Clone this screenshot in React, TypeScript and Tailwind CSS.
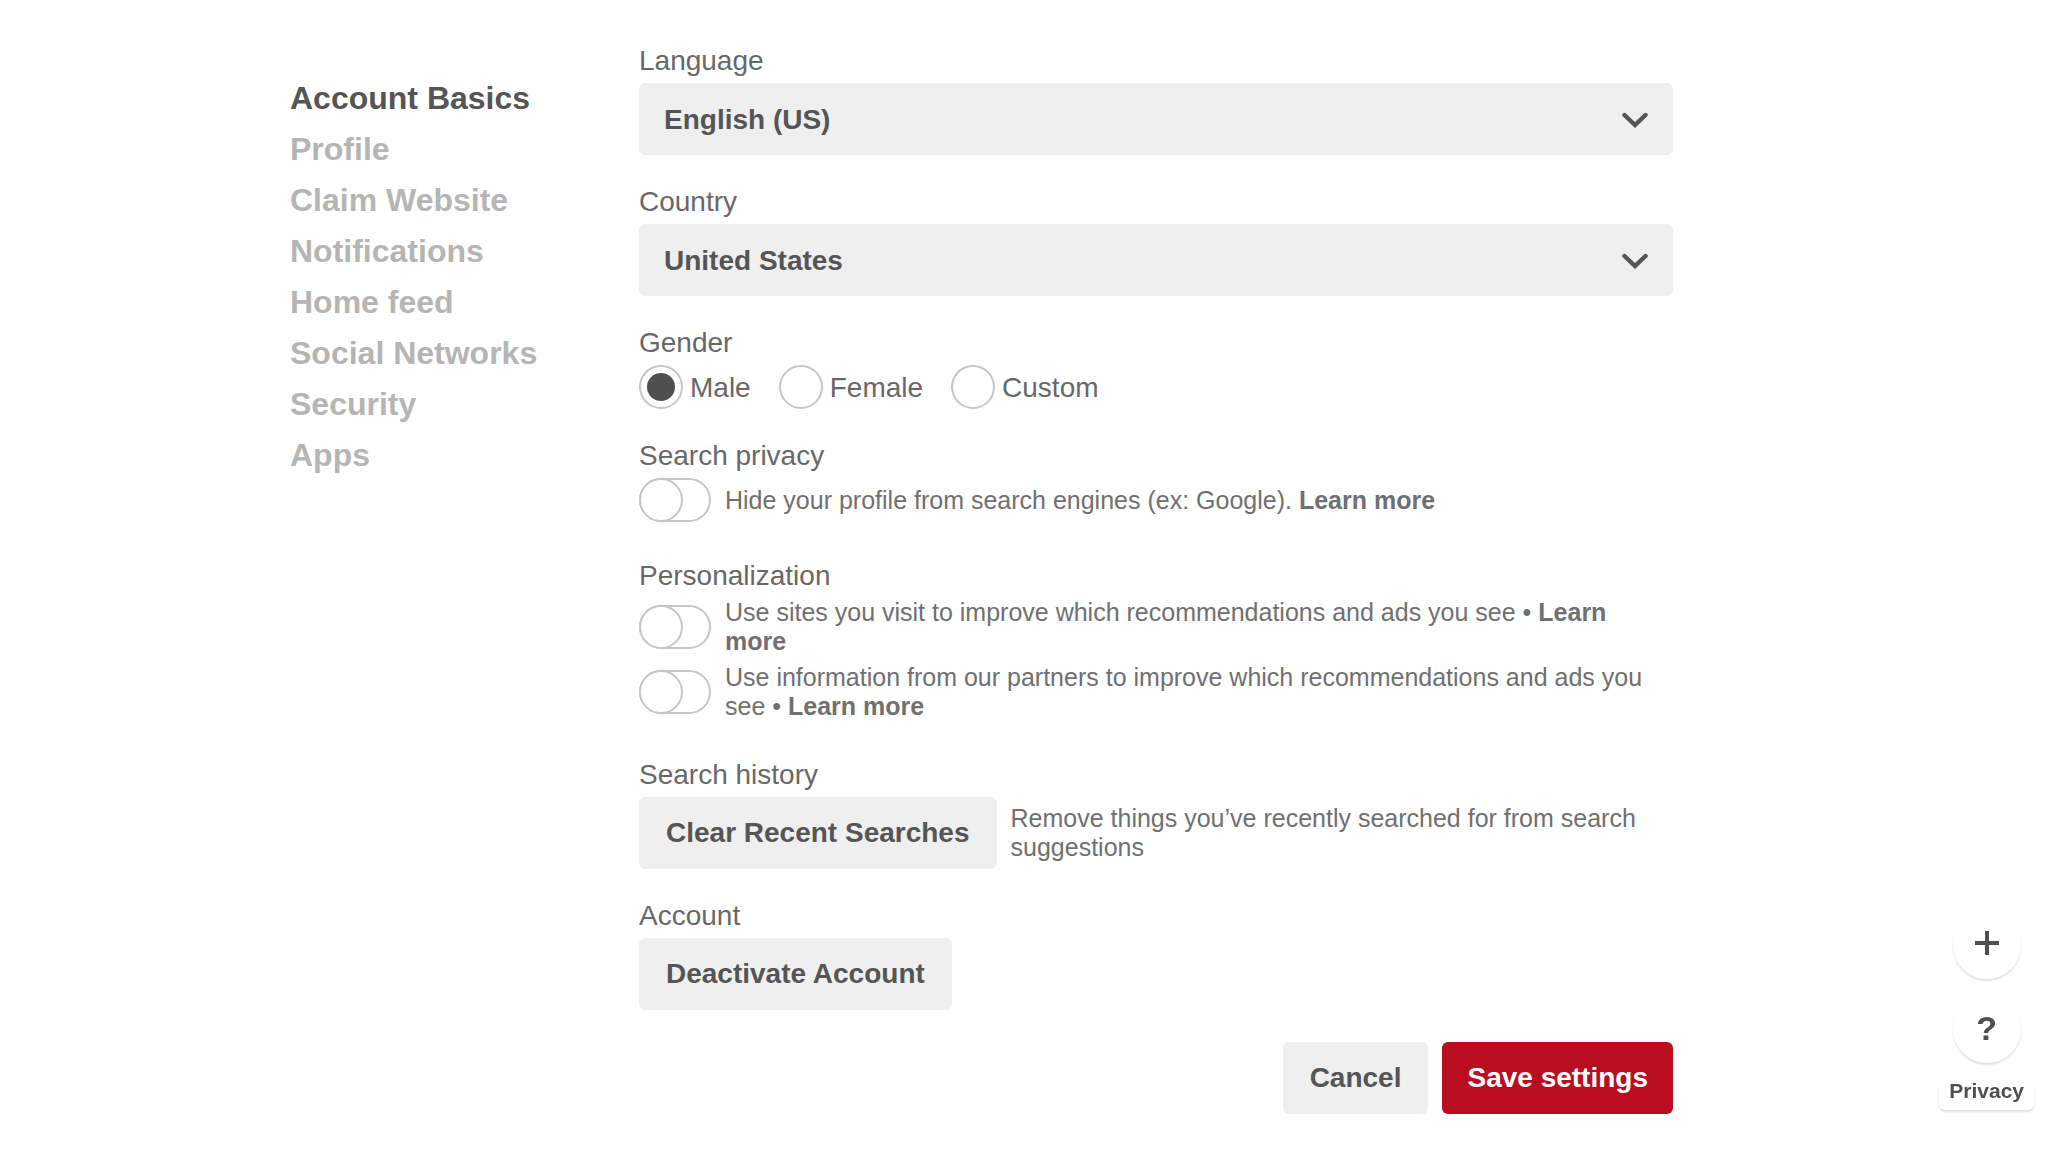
import { useState, type ReactNode } from "react";

const navItems = [
  "Account Basics",
  "Profile",
  "Claim Website",
  "Notifications",
  "Home feed",
  "Social Networks",
  "Security",
  "Apps",
];

const labelClass = "mb-1 block text-[28px] leading-[37px] text-[#686868]";
const grayButton =
  "h-[72px] shrink-0 rounded-md bg-[#efefef] px-[27px] text-[28px] font-bold text-[#555555]";

function SelectField({ id, label, options }: { id: string; label: string; options: string[] }) {
  return (
    <div>
      <label htmlFor={id} className={labelClass}>
        {label}
      </label>
      <div className="relative">
        <select
          id={id}
          className="block h-[72px] w-full appearance-none rounded-md bg-[#efefef] pt-0.5 pr-20 pl-[25px] text-[28px] font-bold text-[#555555]"
        >
          {options.map((o) => (
            <option key={o}>{o}</option>
          ))}
        </select>
        <svg
          className="pointer-events-none absolute top-[29px] right-6 h-4 w-7"
          viewBox="0 0 28 16"
          fill="none"
          stroke="#555555"
          strokeWidth="4.4"
          aria-hidden="true"
        >
          <path d="M3.5 3 14 13 24.5 3" strokeLinecap="round" />
        </svg>
      </div>
    </div>
  );
}

function Group({ label, children }: { label: string; children: ReactNode }) {
  return (
    <fieldset>
      <legend className={labelClass}>{label}</legend>
      {children}
    </fieldset>
  );
}

function ToggleRow({ id, children }: { id: string; children: ReactNode }) {
  return (
    <div className="mb-[7px] flex items-center gap-[14px]">
      <input type="checkbox" role="switch" id={id} className="peer sr-only" />
      <label
        htmlFor={id}
        aria-label="Toggle"
        className="flex h-11 w-[72px] shrink-0 rounded-full border-2 border-[#c6c6c6] bg-white peer-checked:justify-end peer-checked:bg-[#555555]"
      >
        <span className="-m-0.5 size-11 rounded-full border-2 border-[#c6c6c6] bg-white" />
      </label>
      <label htmlFor={id} className="text-[25px] leading-[29px] text-[#707070]">
        {children}
      </label>
    </div>
  );
}

function LearnMore() {
  return (
    <a href="#learn-more" className="font-bold">
      Learn more
    </a>
  );
}

export default function App() {
  const [gender, setGender] = useState("Male");

  return (
    <div className="min-h-screen bg-white font-['Liberation_Sans',Arial,sans-serif]">
      <div className="flex items-start pr-[375px] pl-[290px]">
        <nav className="w-[349px] shrink-0 pt-[73px]">
          <ul>
            {navItems.map((item, i) => (
              <li key={item}>
                <a
                  href={"#" + item.toLowerCase().replace(" ", "-")}
                  aria-current={i === 0 ? "page" : undefined}
                  className={
                    i === 0
                      ? "text-[32px] leading-[51px] font-bold text-[#555555]"
                      : "text-[32px] leading-[51px] font-bold text-[#b5b5b5]"
                  }
                >
                  {item}
                </a>
              </li>
            ))}
          </ul>
        </nav>

        <form
          className="flex min-w-0 flex-1 flex-col gap-7 pt-[42px]"
          onSubmit={(e) => e.preventDefault()}
        >
          <SelectField id="language" label="Language" options={["English (US)"]} />
          <SelectField id="country" label="Country" options={["United States"]} />

          <Group label="Gender">
            <div className="flex gap-7">
              {["Male", "Female", "Custom"].map((g) => (
                <label
                  key={g}
                  className="flex items-center gap-[7px] text-[28px] leading-[37px] text-[#686868]"
                >
                  <input
                    type="radio"
                    name="gender"
                    value={g}
                    checked={gender === g}
                    onChange={() => setGender(g)}
                    className="grid size-11 appearance-none place-items-center rounded-full border-2 border-[#c6c6c6] bg-white before:size-7 before:rounded-full checked:before:bg-[#4f4f4f]"
                  />
                  {g}
                </label>
              ))}
            </div>
          </Group>

          <Group label="Search privacy">
            <ToggleRow id="hide-profile">
              Hide your profile from search engines (ex: Google). <LearnMore />
            </ToggleRow>
          </Group>

          <Group label="Personalization">
            <ToggleRow id="use-sites">
              Use sites you visit to improve which recommendations and ads you see •{" "}
              <LearnMore />
            </ToggleRow>
            <ToggleRow id="use-partners">
              Use information from our partners to improve which recommendations and ads you see
              • <LearnMore />
            </ToggleRow>
          </Group>

          <Group label="Search history">
            <div className="flex items-center gap-[14px]">
              <button type="button" className={grayButton}>
                Clear Recent Searches
              </button>
              <p className="text-[25px] leading-[29px] text-[#707070]">
                Remove things you’ve recently searched for from search suggestions
              </p>
            </div>
          </Group>

          <Group label="Account">
            <button type="button" className={grayButton}>
              Deactivate Account
            </button>
          </Group>

          <div className="flex justify-end gap-[14px] pt-1 pb-9">
            <button type="button" className={grayButton}>
              Cancel
            </button>
            <button
              type="submit"
              className="h-[72px] rounded-md bg-[#b90e20] px-[25px] text-[28px] font-bold text-white"
            >
              Save settings
            </button>
          </div>
        </form>
      </div>

      <aside className="fixed right-[14px] bottom-[42px] flex flex-col items-center gap-4 font-bold text-[#4f4f4f]">
        <button
          type="button"
          aria-label="Add"
          className="grid size-[68px] place-items-center rounded-full bg-white shadow-[0_2px_2px_rgba(0,0,0,0.12)]"
        >
          <svg className="mb-1 size-6" viewBox="0 0 24 24" stroke="currentColor" strokeWidth="4" aria-hidden="true">
            <path d="M12 0V24M0 12H24" />
          </svg>
        </button>
        <button
          type="button"
          aria-label="Help"
          className="grid size-[68px] place-items-center rounded-full bg-white pb-0.5 text-[34px] leading-none shadow-[0_2px_2px_rgba(0,0,0,0.12)]"
        >
          ?
        </button>
        <a
          href="#privacy"
          className="rounded-md bg-white px-[10px] pb-2 text-[21px] leading-[23px] shadow-[0_2px_2px_rgba(0,0,0,0.12)]"
        >
          Privacy
        </a>
      </aside>
    </div>
  );
}
